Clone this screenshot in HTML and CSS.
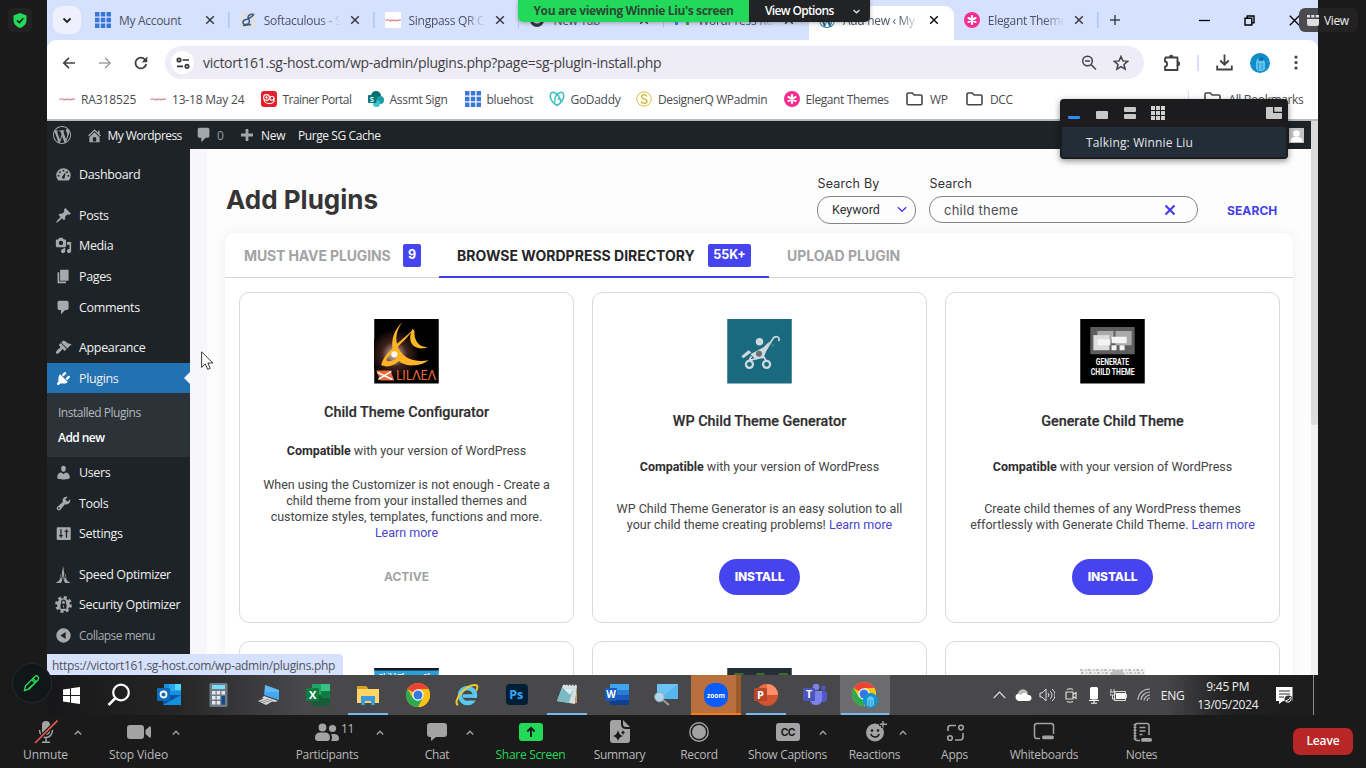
FILE: index.html
```html
<!DOCTYPE html>
<html lang="en">
<head>
<meta charset="utf-8">
<title>Add new ‹ My Wordpress</title>
<link rel="stylesheet" href="styles.css">
</head>
<body>
<svg class="defs" aria-hidden="true">
  <defs>
    <symbol id="grid" viewBox="0 0 15 15"><path fill="#3a76d8" d="M0 0h4.2v4.2H0zM5.4 0h4.2v4.2H5.4zM10.8 0H15v4.2h-4.2zM0 5.4h4.2v4.2H0zM5.4 5.4h4.2v4.2H5.4zM10.8 5.4H15v4.2h-4.2zM0 10.8h4.2V15H0zM5.4 10.8h4.2V15H5.4zM10.8 10.8H15V15h-4.2z"/></symbol>
    <symbol id="x" viewBox="0 0 10 10"><path fill="none" stroke="currentColor" stroke-width="1.5" d="M1.2 1.2l7.6 7.6M8.8 1.2L1.2 8.8"/></symbol>
    <symbol id="up" viewBox="0 0 8 5"><path fill="none" stroke="#a0a0a0" stroke-width="1.4" d="M.8 4.4L4 1.2l3.200 3.200"/></symbol>
    <symbol id="scrawl" viewBox="0 0 16 16"><path fill="none" stroke="#e0433c" stroke-width="1.1" opacity=".6" d="M0 8.300c1-1.200 1.500.8 2.300 0s1.300-1.200 2 0 1.500.6 2.200-.2 1.300.8 2 .3 1.300-1 2 0 1.500.4 2.200-.3 2 .3 3.300 0"/><path fill="none" stroke="#6c5a9a" stroke-width=".6" opacity=".5" d="M4 9l11-.5"/></symbol>
    <symbol id="elegant" viewBox="0 0 16 16"><circle cx="8" cy="8" r="8" fill="#fb2b94"/><path stroke="#fff" stroke-width="2.100" stroke-linecap="round" d="M8 4v8M4.500 6l7 4M11.500 6l-7 4"/></symbol>
    <symbol id="folder" viewBox="0 0 17 14"><path fill="none" stroke="#45464a" stroke-width="1.600" stroke-linejoin="round" d="M1 11.500V2.200Q1 1 2.200 1h4l2 2h6.600Q16 3 16 4.200v7.300q0 1.200-1.200 1.200H2.200Q1 12.700 1 11.500z"/></symbol>
    <symbol id="wp" viewBox="0 0 20 20"><path fill="currentColor" d="M20 10c0-5.510-4.490-10-10-10C4.480 0 0 4.490 0 10c0 5.520 4.480 10 10 10 5.510 0 10-4.480 10-10zM7.780 15.370L4.370 6.220c.55-.02 1.170-.08 1.170-.08.5-.06.44-1.130-.06-1.110 0 0-1.450.11-2.370.11-.18 0-.37 0-.58-.01C4.120 2.690 6.870 1.110 10 1.110c2.330 0 4.450.87 6.050 2.340-.68-.11-1.650.39-1.650 1.580 0 .74.45 1.360.9 2.100.35.61.55 1.360.55 2.460 0 1.490-1.400 5-1.400 5l-3.030-8.370c.54-.02.82-.17.82-.17.5-.05.44-1.250-.06-1.220 0 0-1.440.12-2.380.12-.87 0-2.330-.12-2.330-.12-.5-.03-.56 1.200-.06 1.220l.92.08 1.260 3.410zM17.410 10c.24-.64.74-1.870.43-4.250.7 1.290 1.050 2.710 1.050 4.250 0 3.290-1.730 6.240-4.400 7.780.97-2.590 1.940-5.200 2.920-7.780zM6.100 18.090C3.120 16.650 1.110 13.530 1.110 10c0-1.300.23-2.480.72-3.590C3.250 10.300 4.670 14.200 6.100 18.090zm4.030-6.630l2.580 6.980c-.86.29-1.760.45-2.710.45-.79 0-1.570-.11-2.290-.33.81-2.380 1.620-4.740 2.420-7.100z"/></symbol>
    <symbol id="bubble" viewBox="0 0 20 20"><path fill="currentColor" d="M5 2h9c1.100 0 2 .9 2 2v7c0 1.100-.9 2-2 2h-2l-5 5v-5H5c-1.100 0-2-.9-2-2V4c0-1.100.9-2 2-2z"/></symbol>
    <symbol id="chrome" viewBox="0 0 24 24"><circle cx="12" cy="12" r="12" fill="#fbc116"/><path fill="#ea4335" d="M12 12L1.600 6A12 12 0 0 1 22.400 6H12z"/><path fill="#2da94f" d="M1.600 6A12 12 0 0 0 12 24l5.200-9L12 12 6.800 15z"/><path fill="#fbc116" d="M12 24A12 12 0 0 0 22.400 6H12l5.200 9z"/><circle cx="12" cy="12" r="5.700" fill="#fff"/><circle cx="12" cy="12" r="4.500" fill="#3578e5"/></symbol>
  </defs>
</svg>

<div class="stage">
  <div class="desktop">
    <header class="tabstrip">
      <div class="tabsearch"><svg width="10" height="7" viewBox="0 0 10 7"><path fill="none" stroke="#222" stroke-width="1.800" d="M1.500 1.500L5 5l3.500-3.500"/></svg></div>
      <div class="tab sep"><svg class="fav" width="15" height="15"><use href="#grid"/></svg><span>My Account</span><svg class="close"><use href="#x"/></svg></div>
      <div class="tab sep"><svg class="fav" viewBox="0 0 16 16"><path fill="#dde0e4" d="M0 0h16v16H0z"/><path fill="none" stroke="#365886" stroke-width="1.500" d="M14 2.500C11 1.500 7 3 8.500 6.500S10 12 6 12.500 2 8 6 7.500c3-.3 5-2 8-5M3 13.500l8-1"/></svg><span class="fade">Softaculous - S</span><svg class="close"><use href="#x"/></svg></div>
      <div class="tab sep"><svg class="fav white"><use href="#scrawl"/></svg><span class="fade">Singpass QR Co</span><svg class="close"><use href="#x"/></svg></div>
      <div class="tab sep"><svg class="fav" viewBox="0 0 16 16"><circle cx="8" cy="8" r="7" fill="#333a44"/><circle cx="8" cy="8" r="3.500" fill="#d8e2fe"/><circle cx="8" cy="8" r="2.200" fill="#333a44"/></svg><span>New Tab</span><svg class="close"><use href="#x"/></svg></div>
      <div class="tab"><svg class="fav" viewBox="0 0 16 16"><path fill="#4285f4" d="M1 3h3v10H1z"/><path fill="#34a853" d="M12 3h3v10h-3z"/><path fill="#ea4335" d="M1 3h3l4 3 4-3h3L8 9z"/></svg><span class="fade">WordPress Res</span><svg class="close"><use href="#x"/></svg></div>
      <div class="tab active"><svg class="fav blue"><use href="#wp"/></svg><span class="fade">Add new ‹ My W</span><svg class="close"><use href="#x"/></svg></div>
      <div class="tab sep"><svg class="fav"><use href="#elegant"/></svg><span class="fade">Elegant Themes</span><svg class="close"><use href="#x"/></svg></div>
      <svg class="newtab" width="12" height="12" viewBox="0 0 12 12"><path stroke="#44464c" stroke-width="1.500" d="M6 1v10M1 6h10"/></svg>
      <div class="winctl">
        <svg width="11" height="11" viewBox="0 0 11 11"><path stroke="#000" stroke-width="1.300" d="M0 5.500h11"/></svg>
        <svg width="11" height="11" viewBox="0 0 11 11"><path fill="none" stroke="#000" stroke-width="1.400" d="M1 3.200h6.800V10H1zM3.200 3V1H10v6.800H8"/></svg>
        <svg width="11" height="11" viewBox="0 0 11 11"><path stroke="#000" stroke-width="1.300" d="M.8.8l9.400 9.400M10.200.8L.8 10.200"/></svg>
      </div>
    </header>

    <div class="toolbar">
      <svg class="nav" viewBox="0 0 16 16"><path fill="none" stroke="#404145" stroke-width="1.700" d="M14 8H3M8 2.800L2.800 8 8 13.200"/></svg>
      <svg class="nav" viewBox="0 0 16 16"><path fill="none" stroke="#a0a1a5" stroke-width="1.500" d="M2 8h11M8 2.800L13.200 8 8 13.200"/></svg>
      <svg class="nav" viewBox="0 0 16 16"><path fill="none" stroke="#404145" stroke-width="1.800" d="M13.200 9A5.400 5.400 0 1 1 12 4.500l1.200 1.200"/><path fill="#404145" d="M14.300 1.500v5.700H8.700z"/></svg>
      <div class="omnibox">
        <div class="siteinfo"><svg width="14" height="12" viewBox="0 0 14 12"><g fill="none" stroke="#303134" stroke-width="1.700"><circle cx="3" cy="3" r="1.700"/><path d="M6.500 3H13M1 9.300h6"/><circle cx="11" cy="9.300" r="1.700"/></g></svg></div>
        <span class="url">victort161.sg-host.com/wp-admin/plugins.php?page=sg-plugin-install.php</span>
        <svg class="mag" width="16" height="16" viewBox="0 0 16 16"><g fill="none" stroke="#404145" stroke-width="1.500"><circle cx="6.500" cy="6" r="4.800"/><path d="M10 9.500l5 5M4 6h5"/></g></svg>
        <svg width="16" height="16" viewBox="0 0 16 16"><path fill="none" stroke="#404145" stroke-width="1.500" d="M8 1.500l1.900 4.400 4.800.4L11 9.500l1.100 4.700L8 11.700l-4.100 2.500L5 9.500 1.300 6.300l4.800-.4z"/></svg>
      </div>
      <svg class="ext" width="18" height="18" viewBox="0 0 18 18"><path fill="none" stroke="#404145" stroke-width="1.800" stroke-linejoin="round" d="M2 3.500h12.500V8M14.500 11v5H2v-3.500c2.800 0 2.800-5 0-5V3.500"/><path fill="#404145" d="M6 3a2.200 2.200 0 0 1 4.400 0zM15 7.500a2.200 2.200 0 0 1 0 4.400z"/><path stroke="#404145" stroke-width="1.800" d="M14.500 7v5"/></svg>
      <i class="vbar"></i>
      <svg class="dl" width="17" height="17" viewBox="0 0 17 17"><path fill="none" stroke="#404145" stroke-width="1.800" d="M8.500.5V10M4.300 6.500l4.200 4.200 4.200-4.200M1.200 11.500v4h14.600v-4"/></svg>
      <svg class="avatar" width="20" height="20" viewBox="0 0 20 20"><circle cx="10" cy="10" r="10" fill="#128ccb"/><path fill="#5cc4ec" d="M6 10c0-7 8-7 9 0v6c-2 3-7 3-9 0z"/><path fill="#1c6fae" d="M8 6l3-2.500L14 6l-1.500 2h-3z"/><path fill="none" stroke="#2d97d0" d="M8.500 10v7M12 10v7"/></svg>
      <svg class="dots" width="4" height="15" viewBox="0 0 4 15"><g fill="#404145"><circle cx="2" cy="2" r="1.600"/><circle cx="2" cy="7.500" r="1.600"/><circle cx="2" cy="13" r="1.600"/></g></svg>
    </div>

    <nav class="bookmarks">
      <a class="b1"><svg class="fav"><use href="#scrawl"/></svg>RA318525</a>
      <a class="b2"><svg class="fav"><use href="#scrawl"/></svg>13-18 May 24</a>
      <a class="b3"><svg class="fav" viewBox="0 0 16 16"><rect width="16" height="16" rx="3" fill="#e61f2b"/><g fill="none" stroke="#fff" stroke-width="1.100"><circle cx="5.500" cy="6.500" r="2.900"/><circle cx="5.500" cy="6.500" r=".6"/><circle cx="11" cy="7.200" r="2"/><path d="M3 9c1 4.500 8 4.500 10 1.500V7"/></g></svg>Trainer Portal</a>
      <a class="b4"><svg class="fav" viewBox="0 0 16 16"><circle cx="8" cy="5" r="5" fill="#036c70"/><circle cx="12" cy="9" r="4" fill="#1a9ba1"/><circle cx="8.500" cy="12.500" r="3.500" fill="#37c6d0"/><rect y="4" width="8.500" height="8" rx="1" fill="#03787c"/><text x="1.800" y="10.500" font-size="7.500" font-weight="700" font-family="Open Sans" fill="#fff">S</text></svg>Assmt Sign</a>
      <a class="b5"><svg class="fav" width="15" height="15"><use href="#grid"/></svg>bluehost</a>
      <a class="b6"><svg class="fav" viewBox="0 0 16 16"><g fill="none" stroke="#3ebfbf" stroke-width="1.500"><path d="M8 14.500C-1 9 0 0 5 1.500c3 1 5 3 5.500 6M8 14.500C17 9 16 0 11 1.500c-4 1-6 6-5 10M8.500 8h3v3"/></g></svg>GoDaddy</a>
      <a class="b7"><svg class="fav" viewBox="0 0 16 16"><g fill="none" stroke="#d3be45"><circle cx="8" cy="8" r="7.200"/><path stroke-width="1.500" d="M11 5.500C10 3 5.500 3.200 5.500 5.800S11 7.500 11 10.200s-5 3-6 .2"/></g></svg>DesignerQ WPadmin</a>
      <a class="b8"><svg class="fav"><use href="#elegant"/></svg>Elegant Themes</a>
      <a class="b9"><svg class="fold"><use href="#folder"/></svg>WP</a>
      <a class="b10"><svg class="fold"><use href="#folder"/></svg>DCC</a>
      <i class="vbar"></i>
      <a class="b11"><svg class="fold"><use href="#folder"/></svg>All Bookmarks</a>
    </nav>

    <div class="adminbar">
      <svg class="wplogo"><use href="#wp"/></svg>
      <svg class="home" viewBox="0 0 20 20"><path fill="currentColor" fill-rule="evenodd" d="M16 8.500l1.530 1.530-1.060 1.060L10 4.600l-6.470 6.490-1.060-1.060L10 2.500l4 4v-2h2v4zm-6-2.460l6 5.990V18H4v-5.970zM12 17v-5H8v5h4z"/></svg>
      <span>My Wordpress</span>
      <svg class="cm"><use href="#bubble"/></svg><span class="zero">0</span>
      <svg class="plus" viewBox="0 0 13 13"><path fill="currentColor" d="M5 0h3v5h5v3H8v5H5V8H0V5h5z"/></svg><span>New</span>
      <span class="purge">Purge SG Cache</span>
      <svg class="person" viewBox="0 0 15 15"><path fill="#c4c4c6" d="M0 0h15v15H0z"/><circle cx="7.500" cy="5.500" r="3.300" fill="#fff"/><path fill="#fff" d="M1.500 14c0-5 3-5 6-5s6 0 6 5z"/></svg>
    </div>

    <div class="wp">
      <aside class="menu">
        <a><svg viewBox="0 0 20 20"><path fill="currentColor" d="M3.760 17h12.480A8.500 8.500 0 1 0 3.760 17z"/><g fill="#1d2327"><circle cx="10" cy="5.500" r="1.100"/><circle cx="5.800" cy="7.300" r="1.100"/><circle cx="14.200" cy="7.300" r="1.100"/><circle cx="4.200" cy="11.500" r="1.100"/><circle cx="15.800" cy="11.500" r="1.100"/><path d="M12.500 7l-1 6.500a1.600 1.600 0 1 1-2.700-1.300z"/></g></svg>Dashboard</a>
        <a class="gap"><svg viewBox="0 0 20 20"><path fill="currentColor" d="M10.440 3.020l1.820-1.820 6.360 6.350-1.830 1.820c-1.050-.68-2.480-.57-3.410.36l-.75.75c-.92.93-1.040 2.350-.35 3.410l-1.830 1.820-2.410-2.410-2.800 2.790c-.42.42-3.380 2.710-3.800 2.290s1.860-3.390 2.280-3.810l2.790-2.790L4.100 9.360l1.830-1.820c1.050.69 2.480.57 3.400-.36l.75-.75c.93-.92 1.050-2.350.36-3.410z"/></svg>Posts</a>
        <a><svg viewBox="0 0 20 20"><path fill="currentColor" d="M13 11V4c0-.55-.45-1-1-1h-1.670L9 1H5L3.670 3H2c-.55 0-1 .45-1 1v7c0 .55.45 1 1 1h10c.55 0 1-.45 1-1zM7 4.500c1.380 0 2.500 1.120 2.500 2.500S8.380 9.500 7 9.500 4.500 8.380 4.500 7 5.620 4.500 7 4.500zM14 6h5v10.500c0 1.380-1.120 2.500-2.500 2.500S14 17.880 14 16.500s1.120-2.500 2.500-2.500c.17 0 .34.02.5.05V9h-3V6zm-4 8.050V13h2v3.500c0 1.380-1.120 2.500-2.500 2.500S7 17.880 7 16.500 8.120 14 9.500 14c.17 0 .34.02.5.05z"/></svg>Media</a>
        <a><svg viewBox="0 0 20 20"><path fill="currentColor" d="M6 15V2h10v13H6zm-1 1h8v2H3V5h2v11z"/></svg>Pages</a>
        <a><svg><use href="#bubble"/></svg>Comments</a>
        <a class="gap"><svg viewBox="0 0 20 20"><path fill="currentColor" d="M14.480 11.060L7.410 3.990l1.500-1.500c.5-.56 2.300-.47 3.510.32 1.210.8 1.430 1.280 2.910 2.100 1.180.64 2.450 1.260 4.450.85zm-.71.71L6.700 4.700 4.930 6.470c-.39.39-.39 1.020 0 1.410l1.060 1.060c.39.39.39 1.030 0 1.420-.6.6-1.430 1.110-2.210 1.690-.35.26-.7.53-1.010.84C1.430 14.230.4 16.080 1.400 17.070c.99 1 2.840-.03 4.180-1.360.31-.31.58-.66.85-1.020.57-.78 1.080-1.610 1.690-2.210.39-.39 1.020-.39 1.410 0l1.060 1.060c.39.39 1.020.39 1.410 0z"/></svg>Appearance</a>
        <a class="current"><svg viewBox="0 0 20 20"><path fill="currentColor" d="M13.110 4.360L9.870 7.600 8 5.730l3.240-3.240c.35-.34 1.050-.2 1.560.32.52.51.66 1.210.31 1.550zm-8 1.770l.91-1.120 9.010 9.010-1.190.84c-.71.71-2.630 1.160-3.820 1.160H6.140L4.900 17.260c-.59.59-1.540.59-2.120 0-.59-.58-.59-1.530 0-2.120l1.240-1.240v-3.880c0-1.130.4-3.190 1.090-3.890zm7.260 3.970l3.240-3.240c.34-.35 1.040-.21 1.550.31.52.51.66 1.210.31 1.550l-3.240 3.250z"/></svg>Plugins<i></i></a>
        <div class="submenu"><span>Installed Plugins</span><b>Add new</b></div>
        <a><svg viewBox="0 0 20 20"><path fill="currentColor" d="M10 9.250c-2.270 0-2.730-3.440-2.730-3.440C7 4.020 7.820 2 9.970 2c2.160 0 2.980 2.020 2.710 3.810 0 0-.41 3.440-2.680 3.440zm0 2.570L12.720 10c2.390 0 4.520 2.330 4.520 4.530v2.490s-3.650 1.130-7.240 1.130c-3.650 0-7.240-1.130-7.240-1.130v-2.490c0-2.250 1.940-4.480 4.470-4.480z"/></svg>Users</a>
        <a><svg viewBox="0 0 20 20"><path fill="currentColor" d="M16.680 9.770c-1.340 1.340-3.300 1.670-4.950.99l-5.410 6.520c-.99.99-2.590.99-3.580 0s-.99-2.590 0-3.570l6.520-5.420c-.68-1.650-.35-3.610.99-4.950 1.280-1.280 3.120-1.620 4.720-1.060l-2.890 2.890 2.820 2.820 2.860-2.870c.53 1.580.18 3.390-1.080 4.650zM3.810 16.210c.4.39 1.040.39 1.430 0 .4-.4.4-1.040 0-1.430-.39-.4-1.030-.4-1.430 0-.39.39-.39 1.030 0 1.430z"/></svg>Tools</a>
        <a><svg viewBox="0 0 20 20"><rect x="2" y="2.500" width="16.500" height="15" rx="1" fill="currentColor"/><path stroke="#1d2327" stroke-width="1.500" d="M7 5v10M4.800 12.500h4.400M13.500 5v10M11.300 7.500h4.400"/></svg>Settings</a>
        <a class="gap"><svg viewBox="0 0 20 20"><path fill="currentColor" d="M9.500 0l1.500 9-1.500 8L8 9zM7 9l1.500 8L7 20H1l4-4zM12 9l-1.500 8 1.500 3h6l-4-4z"/><path stroke="#1d2327" d="M3 19l5-8M16 19l-5-8"/></svg>Speed Optimizer</a>
        <a><svg viewBox="0 0 20 20"><circle cx="10" cy="10" r="7.500" fill="currentColor"/><circle cx="10" cy="10" r="8.300" fill="none" stroke="currentColor" stroke-width="3.200" stroke-dasharray="3.500 3.020"/><rect x="6.500" y="9" width="7" height="6" fill="#1d2327"/><path fill="none" stroke="#1d2327" stroke-width="1.400" d="M7.800 9V7a2.200 2.200 0 0 1 4.400 0v2"/><path stroke="currentColor" d="M10 11v2.500"/></svg>Security Optimizer</a>
        <a class="collapse"><svg viewBox="0 0 20 20"><path fill="currentColor" fill-rule="evenodd" d="M10 1.500a8.500 8.500 0 1 1 0 17 8.500 8.500 0 0 1 0-17zM12.500 14V6l-6.300 4z"/></svg>Collapse menu</a>
      </aside>

      <main>
        <div class="strip"></div>
        <div class="content">
          <div class="head">
            <h1>Add Plugins</h1>
            <div class="field by"><label>Search By</label><div class="select">Keyword<svg width="10" height="7" viewBox="0 0 10 7"><path fill="none" stroke="#4340e8" stroke-width="1.400" d="M.8 1.200L5 5.200l4.200-4"/></svg></div></div>
            <div class="field q"><label>Search</label><div class="input">child theme<svg width="12" height="12" viewBox="0 0 12 12"><path stroke="#4340e8" stroke-width="2.200" d="M1.500 1.500l9 9M10.500 1.500l-9 9"/></svg></div></div>
            <span class="go">SEARCH</span>
          </div>
          <section class="panel">
            <div class="ptabs">
              <div class="t1">MUST HAVE PLUGINS<em>9</em></div>
              <div class="t2">BROWSE WORDPRESS DIRECTORY<em>55K+</em></div>
              <div class="t3">UPLOAD PLUGIN</div>
            </div>
            <div class="cards">
              <article class="card first">
                <svg class="logo" viewBox="0 0 64 64"><defs><radialGradient id="fl"><stop offset="0" stop-color="#fff"/><stop offset=".18" stop-color="#a98f86"/><stop offset=".5" stop-color="#40231c"/><stop offset="1" stop-color="#000"/></radialGradient></defs><path d="M0 0h64v64H0z"/><circle cx="20" cy="35" r="25" fill="url(#fl)"/><path fill="#fdb525" d="M28 3C11 18 16 47 38 46c7 0 12-2 16-5-11 2-24 0-30-12-4-9-2-18 4-26z"/><path fill="#fdb525" fill-rule="evenodd" d="M40 9C26 23 9 34 7 46c8 3 15-1 19-6l-2-2c-6 4-10 5-12 3 3-7 20-20 28-32z"/><path fill="#fdb525" d="M38 10c-6 11 0 23 15 18-9 0-14-7-13-16z"/><circle cx="20" cy="35" r="3" fill="#fff" opacity=".9"/><path fill="#e8693a" d="M2 51h14l4 10H6z"/><path stroke="#fff" stroke-width="1.500" d="M3 53l15 7M4 60l13-8"/><text x="21.500" y="60.500" textLength="40" lengthAdjust="spacingAndGlyphs" font-size="13.500" font-family="Lato" fill="#e8693a">LILΛEΛ</text></svg>
                <h2>Child Theme Configurator</h2>
                <p class="compat"><b>Compatible</b> with your version of WordPress</p>
                <p class="desc">When using the Customizer is not enough - Create a<br>child theme from your installed themes and<br>customize styles, templates, functions and more.<br><a>Learn more</a></p>
                <div class="act">ACTIVE</div>
              </article>
              <article class="card">
                <svg class="logo" viewBox="0 0 64 64"><path fill="#19697f" d="M0 0h64v64H0z"/><g fill="none" stroke="#cfd8dd" stroke-width="2.200"><circle cx="22" cy="45" r="3.500"/><circle cx="39" cy="45" r="3.500"/><path stroke-width="1.700" d="M37 33l8-13c2-4 8-3 6 2M24 37l-3 5M35 36l4 6M22 41l12-3"/></g><circle cx="32" cy="22.500" r="3.700" fill="#cfd8dd"/><path fill="#cfd8dd" d="M36 28l6-6-6 17H27l-4-4zM14 37l7-6 3 2-8 6z"/><circle cx="31.500" cy="34.500" r="3" fill="#6b6f70"/><path fill="#2a8a63" d="M43 24l4 1-2 4z"/></svg>
                <h2>WP Child Theme Generator</h2>
                <p class="compat"><b>Compatible</b> with your version of WordPress</p>
                <p class="desc">WP Child Theme Generator is an easy solution to all<br>your child theme creating problems! <a>Learn more</a></p>
                <button>INSTALL</button>
              </article>
              <article class="card">
                <svg class="logo" viewBox="0 0 64 64"><path d="M0 0h64v64H0z"/><path fill="#5e5e60" d="M10 8h44v27H10z"/><path fill="#aaa" d="M17 12h16v8H17zM35 12h16v14H35z"/><path fill="#ddd" d="M13 16h16v15H13z"/><path fill="#f4f4f4" d="M31 17.500h15V24H31zM31 26h5v5h-5zM39 26h5v5h-5zM17 20h13v6H17z"/><g font-family="Roboto" font-weight="700" font-size="8.500" fill="#fff"><text x="15.500" y="46" textLength="33" lengthAdjust="spacingAndGlyphs">GENERATE</text><text x="10.500" y="56" textLength="43.500" lengthAdjust="spacingAndGlyphs">CHILD THEME</text></g></svg>
                <h2>Generate Child Theme</h2>
                <p class="compat"><b>Compatible</b> with your version of WordPress</p>
                <p class="desc">Create child themes of any WordPress themes<br>effortlessly with Generate Child Theme. <a>Learn more</a></p>
                <button>INSTALL</button>
              </article>
              <article class="card"><svg class="logo" viewBox="0 0 64 64"><path fill="#2b9fd8" d="M0 0h64v64H0z"/><path fill="#111a20" d="M0 0h64v2.500H0z"/><text x="4" y="11" font-size="7.500" font-family="Roboto" font-weight="700" fill="#fff">Child Theme Check</text></svg></article>
              <article class="card"><svg class="logo" viewBox="0 0 64 64"><path fill="#242e35" d="M0 0h64v64H0z"/><path fill="#3f6b2c" d="M7 5h9v3H7zM29 5h8v3h-8zM51 5h9v3h-9z"/></svg></article>
              <article class="card"><svg class="logo" viewBox="0 0 64 64"><path fill="#ececec" d="M0 1h64v63H0z"/><path fill="none" stroke="#b4b4b4" stroke-width="2" stroke-dasharray="2 3 1 2" d="M0 2h64M1 5h62"/><ellipse cx="37" cy="6" rx="7" ry="4" fill="#bdbdbd"/></svg></article>
            </div>
          </section>
        </div>
        <div class="scroll"><i></i></div>
      </main>
    </div>

    <footer class="taskbar">
      <div class="tk s"><svg width="17" height="17" viewBox="0 0 17 17"><path fill="#fff" d="M0 2.500l7-1v6.500H0zM8 1.300L17 0v8H8zM0 9h7v6.500l-7-1zM8 9h9v8l-9-1.300z"/></svg></div>
      <div class="tk f"><svg width="24" height="24" viewBox="0 0 24 24"><circle cx="14" cy="9.500" r="7.800" fill="none" stroke="#fff" stroke-width="2.200"/><path stroke="#fff" stroke-width="2.500" d="M8.500 15L1.500 22"/></svg></div>
      <div class="tk"><svg width="24" height="24" viewBox="0 0 24 24"><path fill="#1490df" d="M7 1h17v15H7z"/><path fill="#28a8ea" d="M12 1h12v7H12z"/><path fill="#50d9ff" d="M18 1h6v6h-6z"/><path fill="#0a53a5" d="M6 12h18v10H6z"/><path fill="#1490df" d="M6 22l18-10v10z"/><rect y="5" width="13" height="13" rx="1" fill="#0f6cbd"/><circle cx="6.500" cy="11.500" r="3" fill="none" stroke="#fff" stroke-width="1.800"/></svg></div>
      <div class="tk"><svg width="20" height="24" viewBox="0 0 20 24"><rect x=".5" width="18" height="24" rx="1.500" fill="#6d7a87"/><path fill="#7bdcf5" d="M3 2h13v4H3z"/><path fill="#e5e8eb" d="M3 8h3.500v3.500H3zM7.700 8h3.500v3.500H7.700zM12.500 8H16v3.500h-3.500zM3 13h3.500v3.500H3zM7.700 13h3.500v3.500H7.700zM3 18h3.500v3.500H3zM7.700 18h3.500v3.500H7.700z"/><path fill="#0c4b8c" d="M12.500 13H16v8.500h-3.500z"/></svg></div>
      <div class="tk"><svg width="24" height="24" viewBox="0 0 24 24"><path fill="#45a8f5" d="M8 2l14 5v10L7 12z"/><path fill="#8bd0fb" d="M8 2l14 5v2L8 9z" opacity=".4"/><path fill="#d7dadd" d="M7 13l14 5-3 1-13-4zM1 18l7-3 8 3-7 4z"/><path stroke="#8b9095" d="M3 19l9-3M6 20l9-3"/></svg></div>
      <div class="tk"><svg width="24" height="24" viewBox="0 0 24 24"><path fill="#21a366" d="M6 1h18v11H6z"/><path fill="#33c481" d="M15 1h9v7h-9z"/><path fill="#185c37" d="M6 12h18v11H6z"/><path fill="#107c41" d="M15 8h9v7h-9z"/><rect y="5" width="13" height="13" rx="1" fill="#107c41"/><text x="3" y="15.500" font-family="Open Sans" font-weight="700" font-size="11" fill="#fff">X</text></svg></div>
      <div class="tk run"><svg width="22" height="20" viewBox="0 0 22 20"><path fill="#d99e24" d="M0 1h9l2 2v5H0z"/><path fill="#ffd566" d="M0 4h22v14H0z"/><path fill="#3c9ae0" d="M4 20v-9h14v9h-4v-4H8v4z"/></svg></div>
      <div class="tk"><svg width="24" height="24"><use href="#chrome"/></svg></div>
      <div class="tk"><svg width="24" height="24" viewBox="0 0 24 24"><circle cx="12.500" cy="12.500" r="7.500" fill="none" stroke="#58c9f3" stroke-width="4.500"/><path stroke="#58c9f3" stroke-width="3.500" d="M8 13h14"/><path fill="#48484b" d="M15 15h9v2.500h-9z"/><path fill="none" stroke="#f5c629" stroke-width="2" d="M3 22C-3 19 10 2 20 2c4 0 2 4 1 6"/></svg></div>
      <div class="tk"><svg width="22" height="22" viewBox="0 0 22 22"><rect width="22" height="21" rx="4" fill="#001e36"/><text x="3.200" y="14.500" font-family="Open Sans" font-weight="700" font-size="12.500" fill="#31a8ff">Ps</text></svg></div>
      <div class="tk run"><svg width="24" height="24" viewBox="0 0 24 24"><path fill="#d6dfdf" d="M8 2l14 1-2 18-18-3z"/><path fill="#79b9c4" d="M7 5l11 1-4 14L2 18z"/><path fill="#dceef0" d="M8 5l10 1-3 6z"/><path stroke="#e9e9e9" stroke-width="1.500" stroke-dasharray="1.500 1.500" d="M8 2.500h14"/><path fill="#c6a35a" d="M20 20l2-16v16z"/></svg></div>
      <div class="tk"><svg width="24" height="24" viewBox="0 0 24 24"><path fill="#41a5ee" d="M5 1h19v6H5z"/><path fill="#2b7cd3" d="M5 7h19v5H5z"/><path fill="#185abd" d="M5 12h19v5H5z"/><path fill="#103f91" d="M5 17h19v5H5z"/><rect y="5" width="12" height="13" rx="1" fill="#185abd"/><text x="1.200" y="15" font-family="Open Sans" font-weight="700" font-size="10" fill="#fff">W</text></svg></div>
      <div class="tk"><svg width="24" height="24" viewBox="0 0 24 24"><path fill="#55b7ed" d="M3 1h21v15H3z"/><path fill="#7fd0fa" d="M3 1h21L6 16H3z" opacity=".5"/><circle cx="5.500" cy="14" r="4.800" fill="#acd6ea" stroke="#8dabb9"/><path stroke="#999da0" stroke-width="2" d="M9 17l6 5"/></svg></div>
      <div class="tk zoomtk"><svg width="24" height="24" viewBox="0 0 24 24"><rect width="24" height="24" rx="10" fill="#0b5cff"/><text x="3" y="14.500" textLength="18" lengthAdjust="spacingAndGlyphs" font-family="Open Sans" font-weight="700" font-size="7" fill="#fff">zoom</text></svg></div>
      <div class="tk run"><svg width="24" height="24" viewBox="0 0 24 24"><circle cx="13" cy="12" r="11" fill="#d35230"/><path fill="#ff8f6b" d="M13 1a11 11 0 0 1 11 11H13z"/><path fill="#ed6c47" d="M13 1v11H2A11 11 0 0 1 13 1z"/><rect y="5" width="13" height="13" rx="1" fill="#b7472a"/><text x="3" y="15.500" font-family="Open Sans" font-weight="700" font-size="11" fill="#fff">P</text></svg></div>
      <div class="tk"><svg width="24" height="24" viewBox="0 0 24 24"><circle cx="13" cy="4" r="3.300" fill="#7b83eb"/><circle cx="20.500" cy="5" r="2.300" fill="#5059c9"/><rect x="16" y="8" width="8" height="11" rx="3" fill="#5059c9"/><path fill="#7b83eb" d="M7 8h12v8c0 8-12 8-12 0z"/><rect y="5" width="12" height="13" rx="1" fill="#4b53bc"/><text x="3" y="15.300" font-family="Open Sans" font-weight="700" font-size="10.500" fill="#fff">T</text></svg></div>
      <div class="tk lit"><svg width="26" height="26" viewBox="0 0 26 26"><use href="#chrome" width="24" height="24"/><circle cx="18.500" cy="18.500" r="7.500" fill="#1194d1"/><path fill="#61c9ef" d="M15 18c0-5 7-5 7 0v5c-2 2-5 2-7 0z"/><path fill="none" stroke="#2b93cf" d="M17 18v6M20 18v6"/></svg></div>
      <div class="tray">
        <svg width="13" height="8" viewBox="0 0 13 8"><path fill="none" stroke="#e4e4e4" stroke-width="1.200" d="M.7 7.200l5.800-6 5.800 6"/></svg>
        <svg class="y2" width="17" height="12" viewBox="0 0 17 12"><path fill="#bbb" d="M3 7a5 5 0 0 1 10-3l-7 4z"/><path fill="#fff" d="M1 10C-1 5 4 4 6 6c2-3 6-3 7 0 4-1 5 5 1 6H3z"/></svg>
        <svg class="y3" width="16" height="14" viewBox="0 0 16 14"><path fill="none" stroke="#ddd" d="M1 5h2l4-4v12L3 9H1zM9 5c1 1 1 3 0 4M11 3c2.500 2 2.500 6 0 8M13 1c4 3 4 9 0 12"/></svg>
        <svg class="y4" width="12" height="15" viewBox="0 0 12 15"><path fill="none" stroke="#ddd" stroke-width="1.200" d="M1 4h7v7H1zM8 6.500l3-2v6l-3-2M2 1.500c2-1 4-1 6 0M2 13.500c2 1 4 1 6 0"/></svg>
        <svg class="y5" width="10" height="17" viewBox="0 0 10 17"><rect x="1" width="8" height="12.500" rx="1.500" fill="#fff"/><path stroke="#fff" d="M0 13.500h10M5 13v3M2 16.200h6"/></svg>
        <svg class="y6" width="17" height="12" viewBox="0 0 17 12"><path fill="#fff" d="M6 4h9v6H6z"/><path fill="none" stroke="#ddd" d="M4.500 2.500h11v9h-11zM16.500 5v4M1 0v3M4 0v3M0 3h5v3H0zM2.500 6v4h3"/></svg>
        <svg class="y7" width="14" height="14" viewBox="0 0 14 14"><path fill="none" stroke="#c5c5c5" stroke-width="1.100" d="M1 12C1 6 6 1 13 1M4 12c0-4 4-8 9-8M7 12.500C7 10 10 7 13 7M10 13c0-2 2-3 3-3"/></svg>
        <span class="eng">ENG</span>
        <div class="clock">9:45 PM<br>13/05/2024</div>
        <svg class="note" width="17" height="17" viewBox="0 0 17 17"><path fill="#fff" d="M0 0h16.500v14H7l-4 3v-3H0z"/><path stroke="#333" d="M3 4h11M3 7h11M3 10h5"/><circle cx="12.500" cy="12.500" r="4" fill="#333"/><path fill="none" stroke="#fff" d="M9.500 14c3 3 7-1 5-4-1 2-2 3-5 4z"/></svg>
        <i class="peek"></i>
      </div>
    </footer>

    <div class="status">https://victort161.sg-host.com/wp-admin/plugins.php</div>
  </div>
</div>

<div class="zbar">
  <div class="zb z1"><svg width="24" height="24" viewBox="0 0 24 24"><rect x="8" y="1" width="8" height="14" rx="4" fill="#a3a3a3"/><path fill="none" stroke="#a3a3a3" stroke-width="1.500" d="M5.500 10c0 10 13 10 13 0M12 17.500V22M8 22.300h8"/><path stroke="#1a1a1a" stroke-width="4" d="M2 22L23 1"/><path stroke="#f05a50" stroke-width="1.600" d="M1 23L23.500.5"/></svg><span>Unmute</span></div>
  <svg class="up u1"><use href="#up"/></svg>
  <div class="zb z2"><svg width="24" height="24" viewBox="0 0 24 24"><rect y="5" width="17" height="14" rx="3" fill="#a3a3a3"/><path fill="#a3a3a3" d="M18.500 10l4-3.500q1.500-.5 1.500 1v9q0 1.500-1.500 1L18.500 14z"/></svg><span>Stop Video</span></div>
  <svg class="up u2"><use href="#up"/></svg>
  <div class="zb z3"><svg width="24" height="24" viewBox="0 0 24 24"><g fill="#a3a3a3"><circle cx="7.500" cy="7.500" r="3.900"/><path d="M0 18q0-5.500 5-5.500h5q5 0 5 5.500 0 3-3 3H3q-3 0-3-3z"/><circle cx="17.500" cy="8.500" r="3.600"/><path d="M16 14h3q5 0 5 4.500 0 2.500-2.500 2.500H16q2-3.500 0-7z"/></g></svg><small>11</small><span>Participants</span></div>
  <svg class="up u3"><use href="#up"/></svg>
  <div class="zb z4"><svg width="24" height="24" viewBox="0 0 24 24"><path fill="#a3a3a3" d="M5 3h14q3 0 3 3v8q0 3-3 3h-8l-5 4v-4H5q-3 0-3-3V6q0-3 3-3z"/></svg><span>Chat</span></div>
  <svg class="up u4"><use href="#up"/></svg>
  <div class="zb z5 green"><svg width="24" height="24" viewBox="0 0 24 24"><rect y="3" width="24" height="18" rx="3" fill="#23d959"/><path fill="none" stroke="#1a1a1a" stroke-width="1.900" d="M12 17V8M8.300 11.500L12 7.800l3.700 3.700"/></svg><span>Share Screen</span></div>
  <div class="zb z6"><svg width="24" height="24" viewBox="0 0 24 24"><path fill="#a3a3a3" d="M5 0h8v4q0 5 5 5h4v11q0 3-3 3H5q-3 0-3-3V3q0-3 3-3zM15 0l7 7h-4q-3 0-3-3z"/><path fill="#1a1a1a" d="M10 10q1 5 5 6-4 1-5 5-1-4-5-5 4-1 5-6zM15 10q.5 2 2 2.500-1.500.5-2 2.500-.5-2-2-2.500 1.500-.5 2-2.500z"/></svg><span>Summary</span></div>
  <div class="zb z7"><svg width="24" height="24" viewBox="0 0 24 24"><circle cx="12" cy="12" r="9.200" fill="none" stroke="#a3a3a3" stroke-width="1.400"/><circle cx="12" cy="12" r="7" fill="#a3a3a3"/></svg><span>Record</span></div>
  <div class="zb z8"><svg width="24" height="24" viewBox="0 0 24 24"><rect y="3" width="24" height="18" rx="3" fill="#a3a3a3"/><text x="4.700" y="16" textLength="14.600" font-family="Inter" font-weight="700" font-size="10.500" fill="#1a1a1a">CC</text></svg><span>Show Captions</span></div>
  <svg class="up u5"><use href="#up"/></svg>
  <div class="zb z9"><svg width="24" height="24" viewBox="0 0 24 24"><circle cx="12" cy="12.500" r="9" fill="#a3a3a3"/><circle cx="9" cy="10.500" r="1.300" fill="#1a1a1a"/><circle cx="15" cy="10.500" r="1.300" fill="#1a1a1a"/><path fill="none" stroke="#1a1a1a" stroke-width="1.500" d="M7.800 14c1.500 4 7 4 8.400 0"/><path stroke="#1a1a1a" stroke-width="4" d="M20 0v8M16 4h8"/><path stroke="#a3a3a3" stroke-width="1.400" d="M20 1v6.400M16.800 4.200H24"/></svg><span>Reactions</span></div>
  <svg class="up u6"><use href="#up"/></svg>
  <div class="zb z10"><svg width="24" height="24" viewBox="0 0 24 24"><g fill="none" stroke="#a3a3a3" stroke-width="1.600"><path d="M5 11V8q0-2.500 2.500-2.500H13M20 13v4q0 3-3 3h-5"/><circle cx="18" cy="7.500" r="2.300"/><circle cx="7" cy="18" r="2.300"/></g></svg><span>Apps</span></div>
  <div class="zb z11"><svg width="24" height="24" viewBox="0 0 24 24"><path fill="none" stroke="#a3a3a3" stroke-width="1.500" d="M8 18.500H5q-2.500 0-2.500-2.500V6Q2.500 3.500 5 3.500h14q2.500 0 2.500 2.500v8"/><rect x="10" y="15.500" width="12" height="3.800" rx="1.900" fill="#a3a3a3"/></svg><span>Whiteboards</span></div>
  <div class="zb z12"><svg width="24" height="24" viewBox="0 0 24 24"><path fill="none" stroke="#a3a3a3" stroke-width="1.500" d="M10 20.500H7q-2 0-2-2V5.500q0-2 2-2h10q2 0 2 2V15M9.500 7.500h6M9.500 11h6M9.500 14.500h3"/><path stroke="#a3a3a3" stroke-width="3" stroke-dasharray="1.300 1.500" d="M5 4v16"/><rect x="11" y="18" width="11" height="3.800" rx="1.900" fill="#a3a3a3"/></svg><span>Notes</span></div>
  <div class="leave">Leave</div>
</div>

<div class="shield"><svg width="14" height="15" viewBox="0 0 14 15"><path fill="#23d959" d="M7 0l6.500 2.500V7c0 4-2.500 6.500-6.500 8C3 13.500.5 11 .5 7V2.500z"/><path fill="none" stroke="#1a1a1a" stroke-width="1.600" d="M4 7.200L6.300 9.500l4-4.200"/></svg></div>
<div class="banner"><div class="viewing">You are viewing Winnie Liu's screen</div><div class="opts">View Options<svg width="7" height="5" viewBox="0 0 7 5"><path fill="none" stroke="#ddd" stroke-width="1.400" d="M.5 1l3 2.800L6.500 1"/></svg></div></div>
<div class="viewbtn"><svg width="12" height="11" viewBox="0 0 12 11"><path fill="#ddd" d="M0 0h3v2.500H0zM4.200 0h3.200v2.500H4.200zM8.700 0H12v2.500H8.700zM0 4h12v5q0 2-2 2H2Q0 11 0 9z"/></svg>View</div>
<div class="talk">
  <div class="tools"><i></i><svg width="12" height="8"><rect width="12" height="8" rx="1" fill="#c8c8c8"/></svg><svg class="two" width="12" height="12"><rect width="12" height="5" rx="1" fill="#c8c8c8"/><rect y="7" width="12" height="5" rx="1" fill="#c8c8c8"/></svg><svg class="nine" width="14" height="14" viewBox="0 0 14 14"><path fill="#d0d0d0" d="M0 0h4v4H0zM5 0h4v4H5zM10 0h4v4h-4zM0 5h4v4H0zM5 5h4v4H5zM10 5h4v4h-4zM0 10h4v4H0zM5 10h4v4H5zM10 10h4v4h-4z"/></svg><svg class="pip" width="16" height="12" viewBox="0 0 16 12"><path fill="#c8c8c8" d="M1 0h6v6h9v5q0 1-1 1H1q-1 0-1-1V1q0-1 1-1zM8.300 0H16v4.700H8.300z"/></svg></div>
  <div class="who">Talking: Winnie Liu</div>
</div>
<div class="pen"><svg width="18" height="18" viewBox="0 0 18 18"><path fill="none" stroke="#23d959" stroke-width="1.400" d="M1.500 16.500l1-4.500L12 2.500q1.300-1.300 2.800 0t.4 3.200L6 15.200zM10 4.500l3.300 3.300M9 6l3 3-7 6"/></svg></div>
<svg class="cursor" width="13" height="20" viewBox="0 0 13 20"><path fill="#fff" stroke="#222" stroke-width=".9" d="M.6.8v15.600l3.700-3.500 2.400 5.500 2.500-1.100-2.400-5.300h5z"/></svg>
</body>
</html>
```
FILE: styles.css
```css
* { box-sizing: border-box; }
body { margin: 0; width: 1366px; height: 768px; overflow: hidden; background: #1a1a1a; position: relative; display: flex; flex-direction: column; font-family: "Open Sans", "Noto Sans", sans-serif; font-stretch: 92%; font-size: 12px; }
svg { display: block; flex: none; }
i, em { font-style: normal; flex: none; }
.defs { position: absolute; width: 0; height: 0; }
.stage { height: 715px; padding: 0 48px 0 47px; }
.desktop { position: relative; width: 1271px; height: 715px; display: flex; flex-direction: column; background: linear-gradient(#d6e1fd 60px, #fff 60px); overflow: hidden; }

/* browser tabs */
.tabstrip { height: 40px; flex: none; display: flex; align-items: center; color: #4b5268; letter-spacing: -.3px; }
.tabsearch { width: 28px; height: 28px; margin: 0 4px 0 6px; border-radius: 9px; background: #eef1fd; display: flex; align-items: center; justify-content: center; flex: none; }
.tab { width: 144.800px; height: 34px; flex: none; display: flex; align-items: center; padding-left: 10px; }
.tab span { width: 82px; margin-left: 8px; overflow: hidden; white-space: nowrap; }
.tab .fade { width: 76px; margin-right: 6px; -webkit-mask-image: linear-gradient(90deg, #000 74%, transparent); mask-image: linear-gradient(90deg, #000 74%, transparent); }
.fav { width: 16px; height: 16px; }
.fav.white { background: #fff; }
.fav.blue { color: #21759b; }
.close { width: 10px; height: 10px; margin-left: 4px; color: #383b44; }
.sep { background: linear-gradient(#a8c7fa, #a8c7fa) right center / 1.500px 16px no-repeat; }
.tab.active { background: #fff; border-radius: 9px 9px 0 0; align-self: flex-start; margin-top: 6px; padding-bottom: 6px; }
.active .close { color: #111; }
.newtab { margin-left: 10px; }
.winctl { display: flex; gap: 34px; margin-left: 78px; align-items: center; }

/* address row */
.toolbar { height: 45px; flex: none; display: flex; align-items: center; padding-left: 14px; background: #fff; border-radius: 9px 9px 0 0; }
.nav { width: 16px; height: 16px; margin-right: 20px; }
.toolbar .nav:nth-child(3) { margin-right: 16px; }
.omnibox { width: 979px; height: 33px; border-radius: 17px; background: #eeecf7; display: flex; align-items: center; padding-left: 6px; }
.siteinfo { width: 23px; height: 23px; border-radius: 50%; background: #fff; display: flex; align-items: center; justify-content: center; }
.url { margin-left: 9px; width: 878px; font-size: 14px; letter-spacing: -.28px; color: #404145; white-space: nowrap; }
.mag { margin-right: 16px; }
.ext { margin-left: 19px; }
.vbar { width: 1.500px; height: 16px; background: #d3e1fb; }
.toolbar .vbar { margin-left: 16px; }
.dl { margin-left: 17px; }
.avatar { margin-left: 17px; }
.dots { margin-left: 24px; }

.bookmarks { height: 36px; flex: none; display: flex; align-items: center; padding: 0 0 6px 12px; background: #fff; color: #4a4b50; border-bottom: 2px solid #b9b9b9; letter-spacing: -.4px; }
.bookmarks a { display: flex; align-items: center; gap: 6px; flex: none; white-space: nowrap; }
.fold { width: 17px; height: 14px; margin-right: 1.500px; }
.b1 { width: 91px; letter-spacing: -.1px; } .b2 { width: 110.500px; letter-spacing: -.2px; } .b3 { width: 107px; letter-spacing: -.55px; } .b4 { width: 97px; letter-spacing: -.3px; } .b5 { width: 84px; letter-spacing: -.3px; } .b6 { width: 87.500px; letter-spacing: -.3px; } .b7 { width: 147.500px; } .b8 { width: 122px; } .b9 { width: 60px; } .b10 { width: 222px; }
.b11 { margin-left: 15px; }

/* admin */
.adminbar { height: 28px; flex: none; background: #1d2327; color: #f0f0f1; display: flex; align-items: center; letter-spacing: -.55px; white-space: nowrap; margin-right: 7px; box-shadow: 7px 0 0 #dcdadd; }
.adminbar svg { color: #a3a7ab; }
.wplogo { width: 18px; height: 18px; margin: 0 14.500px 0 6px; }
.home { width: 17px; height: 17px; margin-right: 5px; }
.adminbar span { width: 75px; }
.cm { width: 18px; height: 18px; margin: 0 4px 0 12.500px; }
.adminbar .zero { width: 8px; color: #9a9ea3; }
.plus { width: 12px; height: 12px; margin: 0 8px 0 16px; }
.adminbar .plus + span { width: 37px; letter-spacing: -.3px; }
.adminbar .purge { width: 110px; letter-spacing: -.42px; }
.person { width: 15px; height: 15px; margin-left: auto; margin-right: 7px; }
.wp { height: 526px; flex: none; display: flex; }
.menu { width: 143px; flex: none; background: #1d2327; color: #f0f0f1; padding-top: 10.700px; overflow: hidden; }
.menu a { height: 30.600px; display: flex; align-items: center; padding-left: 8px; gap: 7px; font-size: 12.500px; letter-spacing: -.35px; white-space: nowrap; position: relative; }
.menu svg { width: 17px; height: 17px; color: #a7aaad; }
.menu .gap { margin-top: 9.800px; }
.menu .current { background: #2271b1; }
.menu .current svg { color: #fff; }
.current i { position: absolute; right: 0; top: 9px; border: 6.500px solid transparent; border-right-color: #f6f5f9; border-left: 0; }
.submenu { height: 64px; background: #2c3338; padding: 6.700px 0 0 11px; display: flex; flex-direction: column; letter-spacing: -.48px; line-height: 25px; color: #b4b9be; }
.submenu b { color: #fff; font-weight: 600; letter-spacing: -.55px; }
.menu .collapse { color: #a7aaad; font-size: 12px; letter-spacing: -.55px; }

main { width: 1128px; flex: none; display: flex; background: #fdfdfe; }
.strip { width: 17px; background: #f7f6fa; flex: none; }
.content { width: 1104px; padding: 0 18px; overflow: hidden; }
.scroll { width: 7px; background: #f2f2f5; }
.scroll i { display: block; height: 276px; background: #dcdadd; border-radius: 0 0 3px 3px; }
.head { height: 84px; display: flex; font-family: Inter, sans-serif; color: #303032; }
h1 { margin: 32px 0 0 1px; width: 591px; font: 700 26px/38px Inter, sans-serif; color: #363435; }
.field { margin-top: 26px; }
label { display: block; font-size: 12.500px; letter-spacing: .2px; line-height: 17px; margin: 0 0 4px .5px; }
.by { width: 99px; }
.select { height: 28px; border: 1px solid #858585; border-radius: 13px; display: flex; align-items: center; justify-content: space-between; padding: 0 8px 1px 14px; font-family: Roboto, sans-serif; font-size: 12.500px; }
.q { width: 269px; margin-left: 13px; }
.input { height: 27px; border: 1px solid #858585; border-radius: 13px; display: flex; align-items: center; justify-content: space-between; padding: 0 21px 0 14px; font-size: 13px; letter-spacing: .25px; color: #4c4c50; }
.go { margin: 53px 0 0 29px; font-size: 12px; line-height: 17px; font-weight: 700; color: #4340e8; letter-spacing: .1px; }
.panel { width: 1068px; height: 480px; background: #fff; border-radius: 10px 10px 0 0; box-shadow: 0 0 12px rgba(60, 60, 90, .08); }
.ptabs { height: 45px; display: flex; border-bottom: 1px solid #d4d4d6; font: 700 14px/43px Inter, sans-serif; color: #a3a3a5; white-space: nowrap; padding-left: 1px; }
.ptabs div { height: 45px; display: flex; align-items: center; padding: 0 0 1px 18px; }
.ptabs .t1 { width: 213px; letter-spacing: -.12px; }
.ptabs .t2 { width: 330px; color: #262628; border-bottom: 2px solid #4340e8; padding: 1px 0 0 18px; }
.ptabs em { height: 23px; line-height: 22px; border-radius: 2px; background: #4644ee; color: #fff; font-size: 12.500px; letter-spacing: 0; text-align: center; margin-left: auto; }
.t1 em { width: 18px; margin-right: 18px; }
.t2 em { width: 43px; margin-right: 18px; }
.cards { display: grid; grid-template-columns: repeat(3, 335px); grid-auto-rows: 331px; gap: 18px; padding: 13.500px 14px; }
.card { border: 1px solid #dadadc; border-radius: 10px; display: flex; flex-direction: column; align-items: center; padding-top: 26.500px; text-align: center; color: #434345; font-family: Roboto, sans-serif; font-size: 12.500px; }
.logo { width: 65px; height: 64.500px; }
.card h2 { margin: 28.500px 0 0; font-size: 14.400px; line-height: 20px; font-weight: 500; color: #2e2e30; -webkit-text-stroke: .2px #2e2e30; }
.card p { margin: 0; line-height: 16.200px; white-space: nowrap; }
.card .compat { margin-top: 27px; }
.compat b { font-weight: 700; letter-spacing: -.05px; color: #2e2e30; }
.card .desc { margin-top: 25.800px; }
.desc a { color: #4a45c8; }
.card button { width: 81px; height: 36px; padding: 0; margin-top: 25.500px; border: 0; border-radius: 18px; background: #4644ee; color: #fff; font: 800 12px Inter, sans-serif; letter-spacing: -.1px; }
.card.first h2 { margin-top: 19.500px; }
.card.first .compat { margin-top: 20px; }
.card.first .desc { margin-top: 17.500px; }
.act { margin-top: 26.500px; font: 700 12px/18px Inter, sans-serif; color: #a3a3a5; }

/* taskbar */
.taskbar { height: 40px; flex: none; display: flex; background: linear-gradient(90deg, #171719, #252526 10%, #48474a 20%, #48474a 77%, #464548 88%, #202021 93%, #1c1c1d); color: #eee; }
.tk { width: 49.700px; height: 40px; flex: none; display: flex; align-items: center; justify-content: center; }
.tk.s { width: 48px; } .tk.f { width: 49.500px; padding-right: 2px; }
.run { background: linear-gradient(#76b9ed, #76b9ed) center bottom / 40px 2px no-repeat; }
.zoomtk { background: linear-gradient(#ff7a12, #ff7a12) center bottom / 100% 2px no-repeat, linear-gradient(90deg, #b8713c 91%, #9c5a2b 91%); }
.lit { background: linear-gradient(#76b9ed, #76b9ed) center bottom / 48px 2px no-repeat, #6c6b6e; }
.tray { display: flex; align-items: center; margin-left: 103px; flex: 1; letter-spacing: -.2px; }
.y2 { margin-left: 9px; } .y3 { margin-left: 7px; } .y4 { margin-left: 10.500px; } .y5 { margin-left: 12px; } .y6 { margin-left: 11px; } .y7 { margin-left: 10px; }
.eng { margin-left: 9.500px; width: 24px; }
.clock { width: 66px; margin-left: 10px; text-align: center; line-height: 18px; white-space: nowrap; letter-spacing: -.25px; padding-top: 1px; }
.note { margin-left: 15.500px; }
.peek { margin-left: auto; margin-right: 4px; width: 1px; height: 40px; background: #888; }
.status { position: absolute; left: 0; top: 654px; width: 296px; height: 21px; background: #d6e1fd; border-radius: 0 4px 0 0; color: #50535c; padding-left: 5px; line-height: 23px; letter-spacing: -.3px; white-space: nowrap; }

/* meeting controls */
.zbar { height: 53px; display: flex; align-items: flex-start; color: #b8b8b8; letter-spacing: -.3px; }
.zb { flex: none; display: flex; flex-direction: column; align-items: center; padding-top: 5px; position: relative; white-space: nowrap; }
.zb span { margin-top: 3px; line-height: 16px; }
.zb small { position: absolute; left: 55.500px; top: 6px; font-size: 12px; line-height: 18px; }
.zb small { left: 54px; top: 5px; }
.green span { color: #23d959; }
.up { width: 8px; height: 5px; margin-top: 15px; }
.z1 { width: 50px; margin-left: 20.500px; } .z1 span { letter-spacing: -.1px; } .u1 { margin-left: 3.500px; }
.z2 { width: 60px; margin-left: 26.500px; } .z2 span { letter-spacing: -.1px; } .u2 { margin-left: 3.500px; }
.z3 { width: 80px; margin-left: 107px; } .u3 { margin-left: 9px; }
.z4 { width: 40px; margin-left: 33px; } .u4 { margin-left: 9px; }
.z5 { width: 80px; margin-left: 16.500px; }
.z6 { width: 60px; margin-left: 19px; }
.z7 { width: 60px; margin-left: 19.500px; }
.z8 { width: 60px; margin-left: 28.500px; } .u5 { margin-left: 1.500px; }
.z9 { width: 44px; margin-left: 25.500px; } .u6 { margin-left: 2.500px; }
.z10 { width: 50px; margin-left: 22.500px; }
.z11 { width: 80px; margin-left: 24.500px; }
.z12 { width: 50px; margin-left: 32.500px; }
.leave { width: 60px; height: 27px; margin: 13px 0 0 126.500px; border-radius: 7px; background: #b92626; color: #fff; font-weight: 600; letter-spacing: -.1px; line-height: 26px; text-align: center; }

/* floating overlays */
.shield { position: absolute; left: 8px; top: 8px; width: 24px; height: 24px; border-radius: 5px; background: #222; display: flex; align-items: center; justify-content: center; }
.banner { position: absolute; left: 518px; top: 0; height: 22px; width: 352px; display: flex; border-radius: 0 0 5px 5px; overflow: hidden; font-weight: 600; line-height: 22px; white-space: nowrap; box-shadow: 0 1px 4px rgba(0,0,0,.3); }
.viewing { width: 231px; background: #23d959; color: #2c4a35; text-align: center; font-weight: 700; letter-spacing: -.38px; }
.opts { width: 121px; background: #222325; color: #fff; display: flex; align-items: center; padding: 0 10px 0 16px; justify-content: space-between; letter-spacing: -.65px; }
.viewbtn { position: absolute; left: 1299px; top: 8px; width: 59px; height: 24px; border-radius: 6px; background: linear-gradient(90deg, #4b4b4f 19px, #222 19px); color: #eee; display: flex; align-items: center; gap: 5px; padding-left: 8px; letter-spacing: -.4px; }
.talk { position: absolute; left: 1060px; top: 99px; width: 228px; height: 60px; border: 2px solid #1c1c1e; border-top: 0; border-radius: 4px; background: #1c1c1e; box-shadow: 0 2px 6px rgba(0,0,0,.45); }
.tools { height: 28px; display: flex; align-items: center; padding-left: 6px; }
.tools i { width: 12px; height: 3px; margin-top: 9px; border-radius: 1px; background: #2d8cff; }
.tools svg { margin: 4px 0 0 16px; }
.tools .two { margin-top: 0; }
.tools .nine { margin: 0 0 0 15px; }
.tools .pip { margin: 0 0 0 101px; }
.who { height: 30px; background: #232d37; color: #e2e5e8; line-height: 31px; padding-left: 24px; letter-spacing: .15px; }
.pen { position: absolute; left: 12px; top: 663px; width: 40px; height: 40px; border-radius: 50%; background: #111619; border: 1px solid #25292d; display: flex; align-items: center; justify-content: center; }
.cursor { position: absolute; left: 201px; top: 351px; }
```
